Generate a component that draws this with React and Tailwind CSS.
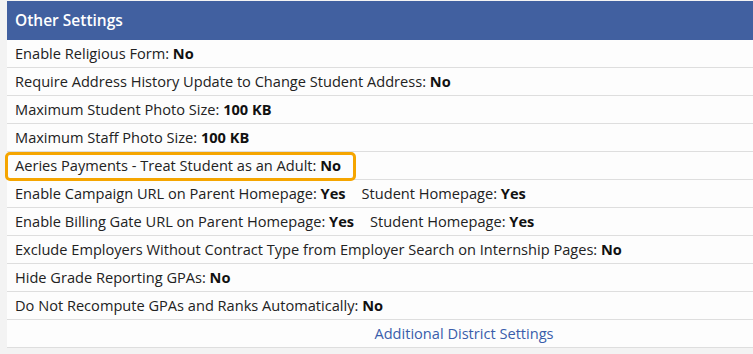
import React from 'react';

const rows = [
    [['Enable Religious Form', 'No']],
    [['Require Address History Update to Change Student Address', 'No']],
    [['Maximum Student Photo Size', '100 KB']],
    [['Maximum Staff Photo Size', '100 KB']],
    [['Aeries Payments - Treat Student as an Adult', 'No']],
    [['Enable Campaign URL on Parent Homepage', 'Yes'], ['Student Homepage', 'Yes']],
    [['Enable Billing Gate URL on Parent Homepage', 'Yes'], ['Student Homepage', 'Yes']],
    [['Exclude Employers Without Contract Type from Employer Search on Internship Pages', 'No']],
    [['Hide Grade Reporting GPAs', 'No']],
    [['Do Not Recompute GPAs and Ranks Automatically', 'No']],
];

const App = () => {
    return (
        <div className="w-[753px] h-[354px] overflow-hidden bg-[#f3f3f3] pl-[7px] pt-[1px] text-[#222] font-['Open_Sans','Liberation_Sans',sans-serif]">
            <div className="w-[914px] bg-[#fdfdfd]">
                <div className="h-[39px] bg-[#4160a0] text-white text-[15.5px] font-semibold flex items-center pl-2">
                    Other Settings
                </div>
                {rows.map((row, i) => (
                    <div key={i} className="relative h-[28px] border-b border-[#dedede] flex items-center pl-2 text-[14.6px]">
                        {row.map(([label, value], j) => (
                            <span key={j} className={j > 0 ? 'ml-4' : ''}>
                                {label}: <b className="font-bold text-[#111]">{value}</b>
                            </span>
                        ))}
                        {i === 4 && (
                            <div className="absolute left-[-2px] top-[0px] w-[351px] h-[29px] border-[3px] border-[#f5a500] rounded-[5px]" />
                        )}
                    </div>
                ))}
                <div className="h-[28px] border-b border-[#dedede] flex items-center justify-center text-[14.6px] text-[#3a5dab]">
                    Additional District Settings
                </div>
            </div>
        </div>
    );
};

export default App;
